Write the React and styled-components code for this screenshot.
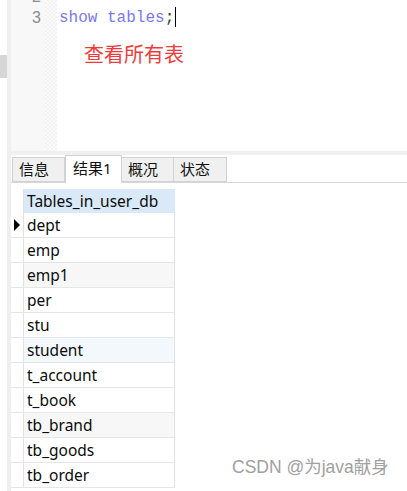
import React from "react";
import styled, { createGlobalStyle } from "styled-components";

const GlobalStyle = createGlobalStyle`
  html, body {
    margin: 0;
    padding: 0;
    background: #ffffff;
    overflow: hidden;
  }
`;

const UI_FONT = `"Noto Sans", "Noto Sans CJK SC", sans-serif`;

const Page = styled.div`
  width: 407px;
  height: 491px;
  display: flex;
  position: relative;
  overflow: hidden;
  background: #ffffff;
  font-family: ${UI_FONT};
`;

const ScrollRail = styled.div`
  width: 7px;
  flex: none;
  display: flex;
  flex-direction: column;
  padding-top: 55px;
  box-sizing: border-box;
`;

const ScrollThumb = styled.div`
  height: 23px;
  background: #d6d6d6;
`;

const Strip = styled.div`
  width: 4px;
  flex: none;
  background: #efefef;
`;

const Main = styled.div`
  flex: 1;
  display: flex;
  flex-direction: column;
  min-width: 0;
`;

const Editor = styled.div`
  height: 151px;
  flex: none;
  display: flex;
  overflow: hidden;
`;

const Gutter = styled.div`
  width: 34px;
  background: #f8f8f8;
  padding: 0 4px 0 0;
  box-sizing: border-box;
  text-align: right;
  font-family: "Liberation Sans", sans-serif;
  font-size: 16px;
  color: #8c8c8c;
`;

const MarkerMargin = styled.div`
  width: 12px;
  background-color: #fbfbfb;
  background-image: linear-gradient(45deg, #f3f3f3 25%, transparent 25%, transparent 75%, #f3f3f3 75%),
    linear-gradient(45deg, #f3f3f3 25%, transparent 25%, transparent 75%, #f3f3f3 75%);
  background-size: 4px 4px;
  background-position: 0 0, 2px 2px;
`;

const Code = styled.div`
  flex: 1;
  padding-left: 2px;
  font-family: "Liberation Mono", monospace;
  font-size: 16px;
`;

const Lines = styled.div`
  margin-top: -14px;
`;

const Line = styled.div`
  height: 21px;
  line-height: 21px;
  white-space: pre;
`;

const Keyword = styled.span`
  color: #7a78f2;
`;

const Punct = styled.span`
  color: #3a3a3a;
`;

const Caret = styled.span`
  display: inline-block;
  width: 1px;
  height: 20px;
  background: #000000;
  margin-left: 1px;
  vertical-align: -5px;
`;

const Note = styled.div`
  margin: 15px 0 0 25px;
  font-family: "Noto Sans CJK SC", sans-serif;
  font-size: 20px;
  line-height: 22px;
  color: #f23a3a;
`;

const Band = styled.div`
  height: 4px;
  flex: none;
  background: #f0f0f0;
`;

const TabBar = styled.div`
  height: 28px;
  flex: none;
  display: flex;
  align-items: flex-end;
  padding-left: 1px;
  border-bottom: 1px solid #d6d6d6;
  box-sizing: border-box;
`;

const Tab = styled.div`
  width: ${(p) => p.w}px;
  height: ${(p) => (p.active ? 28 : 25)}px;
  margin-bottom: ${(p) => (p.active ? -1 : 0)}px;
  box-sizing: border-box;
  border: 1px solid #d2d2d2;
  border-bottom: ${(p) => (p.active ? "none" : "1px solid #d2d2d2")};
  border-left: ${(p) => (p.first || p.active ? "1px solid #d2d2d2" : "none")};
  background: ${(p) => (p.active ? "#ffffff" : "#f0f0f0")};
  padding-left: ${(p) => (p.active ? 7 : 6)}px;
  padding-top: ${(p) => (p.active ? 1 : 0)}px;
  font-size: 15px;
  line-height: 23px;
  color: #111111;
  flex: none;
`;

const Grid = styled.div`
  margin-top: 6px;
  display: grid;
  grid-template-columns: 13px 151px;
  font-size: 15.5px;
  color: #0c0c0c;
`;

const Indicator = styled.div`
  height: ${(p) => (p.header ? 24 : 25)}px;
  box-sizing: border-box;
  border-bottom: ${(p) => (p.header ? "none" : "1px solid #e6e6e6")};
  border-right: 1px solid #e2e2e2;
  display: flex;
  align-items: center;
  padding-left: 3px;
`;

const Arrow = styled.span`
  width: 0;
  height: 0;
  border-top: 6px solid transparent;
  border-bottom: 6px solid transparent;
  border-left: 6px solid #000000;
`;

const HeaderCell = styled.div`
  height: 24px;
  background: #d9e9f8;
  box-sizing: border-box;
  padding-left: 3px;
  line-height: 24px;
  white-space: nowrap;
`;

const Cell = styled.div`
  height: 25px;
  box-sizing: border-box;
  background: ${(p) => p.bg || "#ffffff"};
  border-bottom: 1px solid #e6e6e6;
  border-right: 1px solid #e2e2e2;
  padding-left: 3px;
  line-height: 24px;
  white-space: nowrap;
`;

const Watermark = styled.div`
  position: absolute;
  left: 232px;
  top: 453px;
  font-family: "Liberation Sans", "Noto Sans CJK SC", sans-serif;
  font-size: 17.5px;
  color: #a0a0a0;
  white-space: nowrap;
`;

const TABS = [
  { label: "信息", w: 53 },
  { label: "结果1", w: 57, active: true },
  { label: "概况", w: 52 },
  { label: "状态", w: 53 },
];

const ROWS = [
  { name: "dept", current: true },
  { name: "emp" },
  { name: "emp1", bg: "#f7f7f7" },
  { name: "per" },
  { name: "stu" },
  { name: "student", bg: "#f3f8fd" },
  { name: "t_account" },
  { name: "t_book" },
  { name: "tb_brand", bg: "#f7f7f7" },
  { name: "tb_goods" },
  { name: "tb_order" },
];

export default function App() {
  return (
    <>
      <GlobalStyle />
      <Page>
        <ScrollRail>
          <ScrollThumb />
        </ScrollRail>
        <Strip />
        <Main>
          <Editor>
            <Gutter>
              <Lines>
                <Line>2</Line>
                <Line>3</Line>
              </Lines>
            </Gutter>
            <MarkerMargin />
            <Code>
              <Lines>
                <Line> </Line>
                <Line>
                  <Keyword>show tables</Keyword>
                  <Punct>;</Punct>
                  <Caret />
                </Line>
              </Lines>
              <Note>查看所有表</Note>
            </Code>
          </Editor>
          <Band />
          <TabBar>
            {TABS.map((t, i) => (
              <Tab key={t.label} w={t.w} active={t.active} first={i === 0}>
                {t.label}
              </Tab>
            ))}
          </TabBar>
          <Grid>
            <Indicator header />
            <HeaderCell>Tables_in_user_db</HeaderCell>
            {ROWS.map((r) => (
              <React.Fragment key={r.name}>
                <Indicator>{r.current && <Arrow />}</Indicator>
                <Cell bg={r.bg}>{r.name}</Cell>
              </React.Fragment>
            ))}
          </Grid>
        </Main>
        <Watermark>CSDN @为java献身</Watermark>
      </Page>
    </>
  );
}
